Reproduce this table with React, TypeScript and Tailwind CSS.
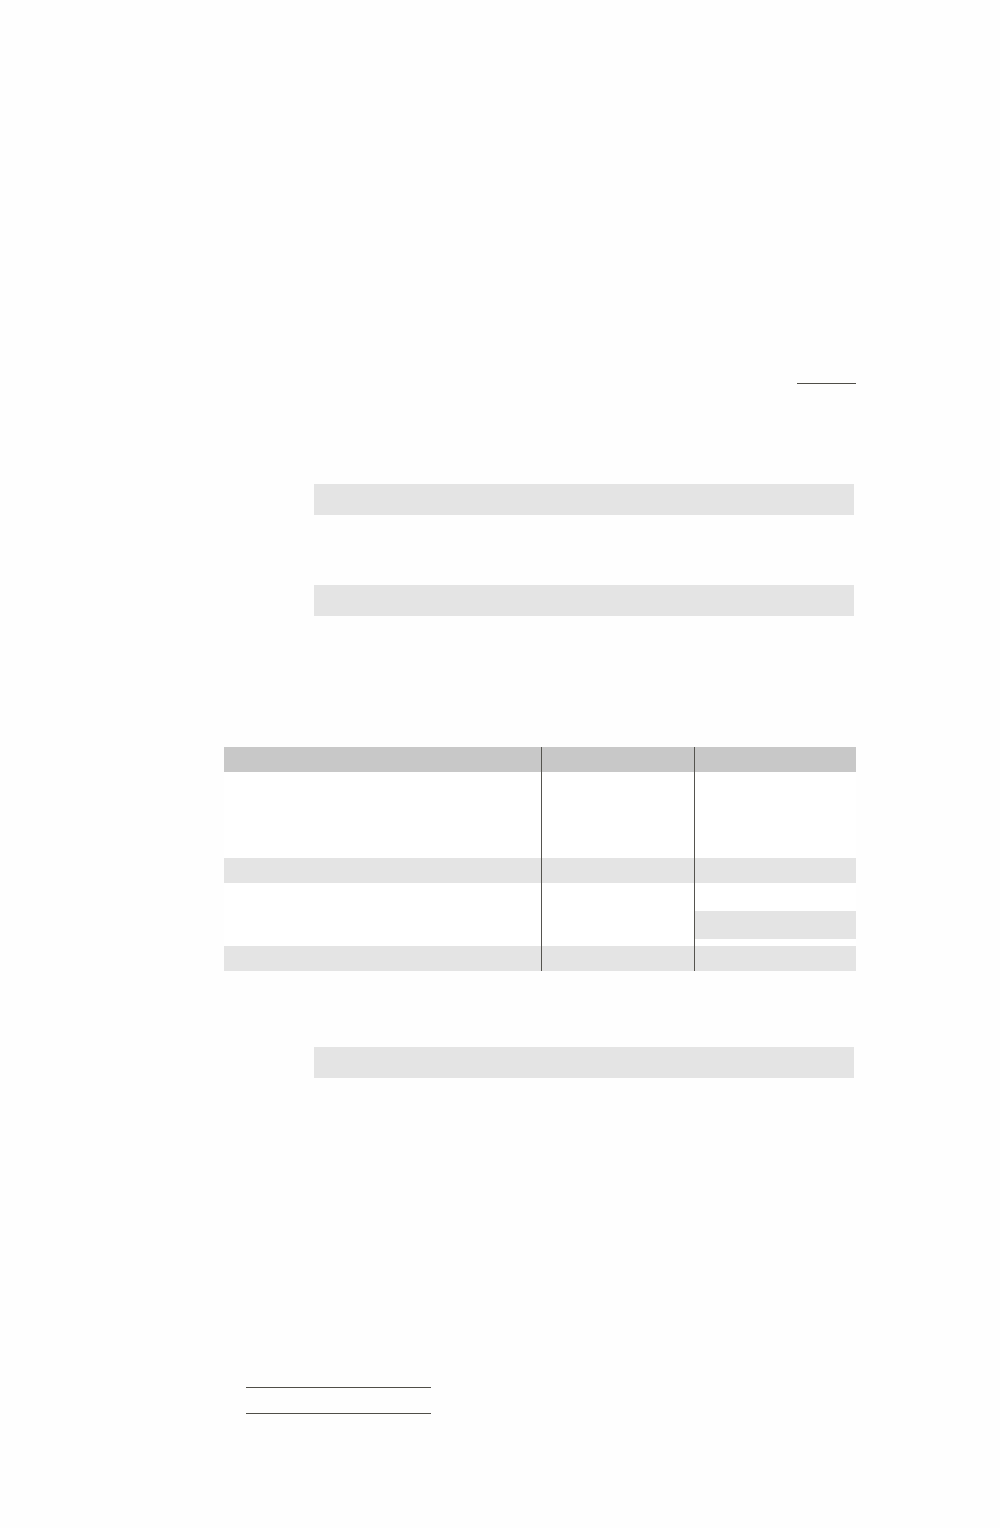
// Blank document page: shaded form fields, a table skeleton and signature rules.

const shade = 'bg-[#e4e4e4]';
const rule = 'bg-[#4f4e48]';

function FieldBar({ mt }: { mt: string }) {
  return <div className={`${mt} ml-[314px] h-[31px] w-[540px] ${shade}`} />;
}

type Row = { h: string; bg: string; third?: 'split' };

const rows: Row[] = [
  { h: 'h-[25px]', bg: 'bg-[#c8c8c8]' },
  { h: 'h-[29px]', bg: 'bg-white' },
  { h: 'h-[29px]', bg: 'bg-white' },
  { h: 'h-[28px]', bg: 'bg-white' },
  { h: 'h-[25px]', bg: shade },
  { h: 'h-[28px]', bg: 'bg-white' },
  { h: 'h-[35px]', bg: 'bg-white', third: 'split' },
  { h: 'h-[25px]', bg: shade },
];

function Table() {
  return (
    <div className="mt-[131px] ml-[224px] grid w-[632px] grid-cols-[317px_153px_162px]">
      {rows.map((r, i) => (
        <div key={i} className="contents">
          <div className={`${r.h} ${r.bg}`} />
          <div className={`${r.h} ${r.bg} border-l border-[#55544f]`} />
          {r.third === 'split' ? (
            <div className={`${r.h} flex flex-col border-l border-[#55544f] bg-white`}>
              <div className={`h-[28px] ${shade}`} />
            </div>
          ) : (
            <div className={`${r.h} ${r.bg} border-l border-[#55544f]`} />
          )}
        </div>
      ))}
    </div>
  );
}

export default function App() {
  return (
    <div className="min-h-[1528px] w-[1000px] bg-[#fefefe] pt-[383px]">
      <div className="flex justify-end pr-[144px]">
        <div className={`h-px w-[59px] ${rule}`} />
      </div>

      <FieldBar mt="mt-[100px]" />
      <FieldBar mt="mt-[70px]" />

      <Table />

      <FieldBar mt="mt-[76px]" />

      <div className={`mt-[309px] ml-[246px] h-px w-[185px] ${rule}`} />
      <div className={`mt-[25px] ml-[246px] h-px w-[185px] ${rule}`} />
    </div>
  );
}
